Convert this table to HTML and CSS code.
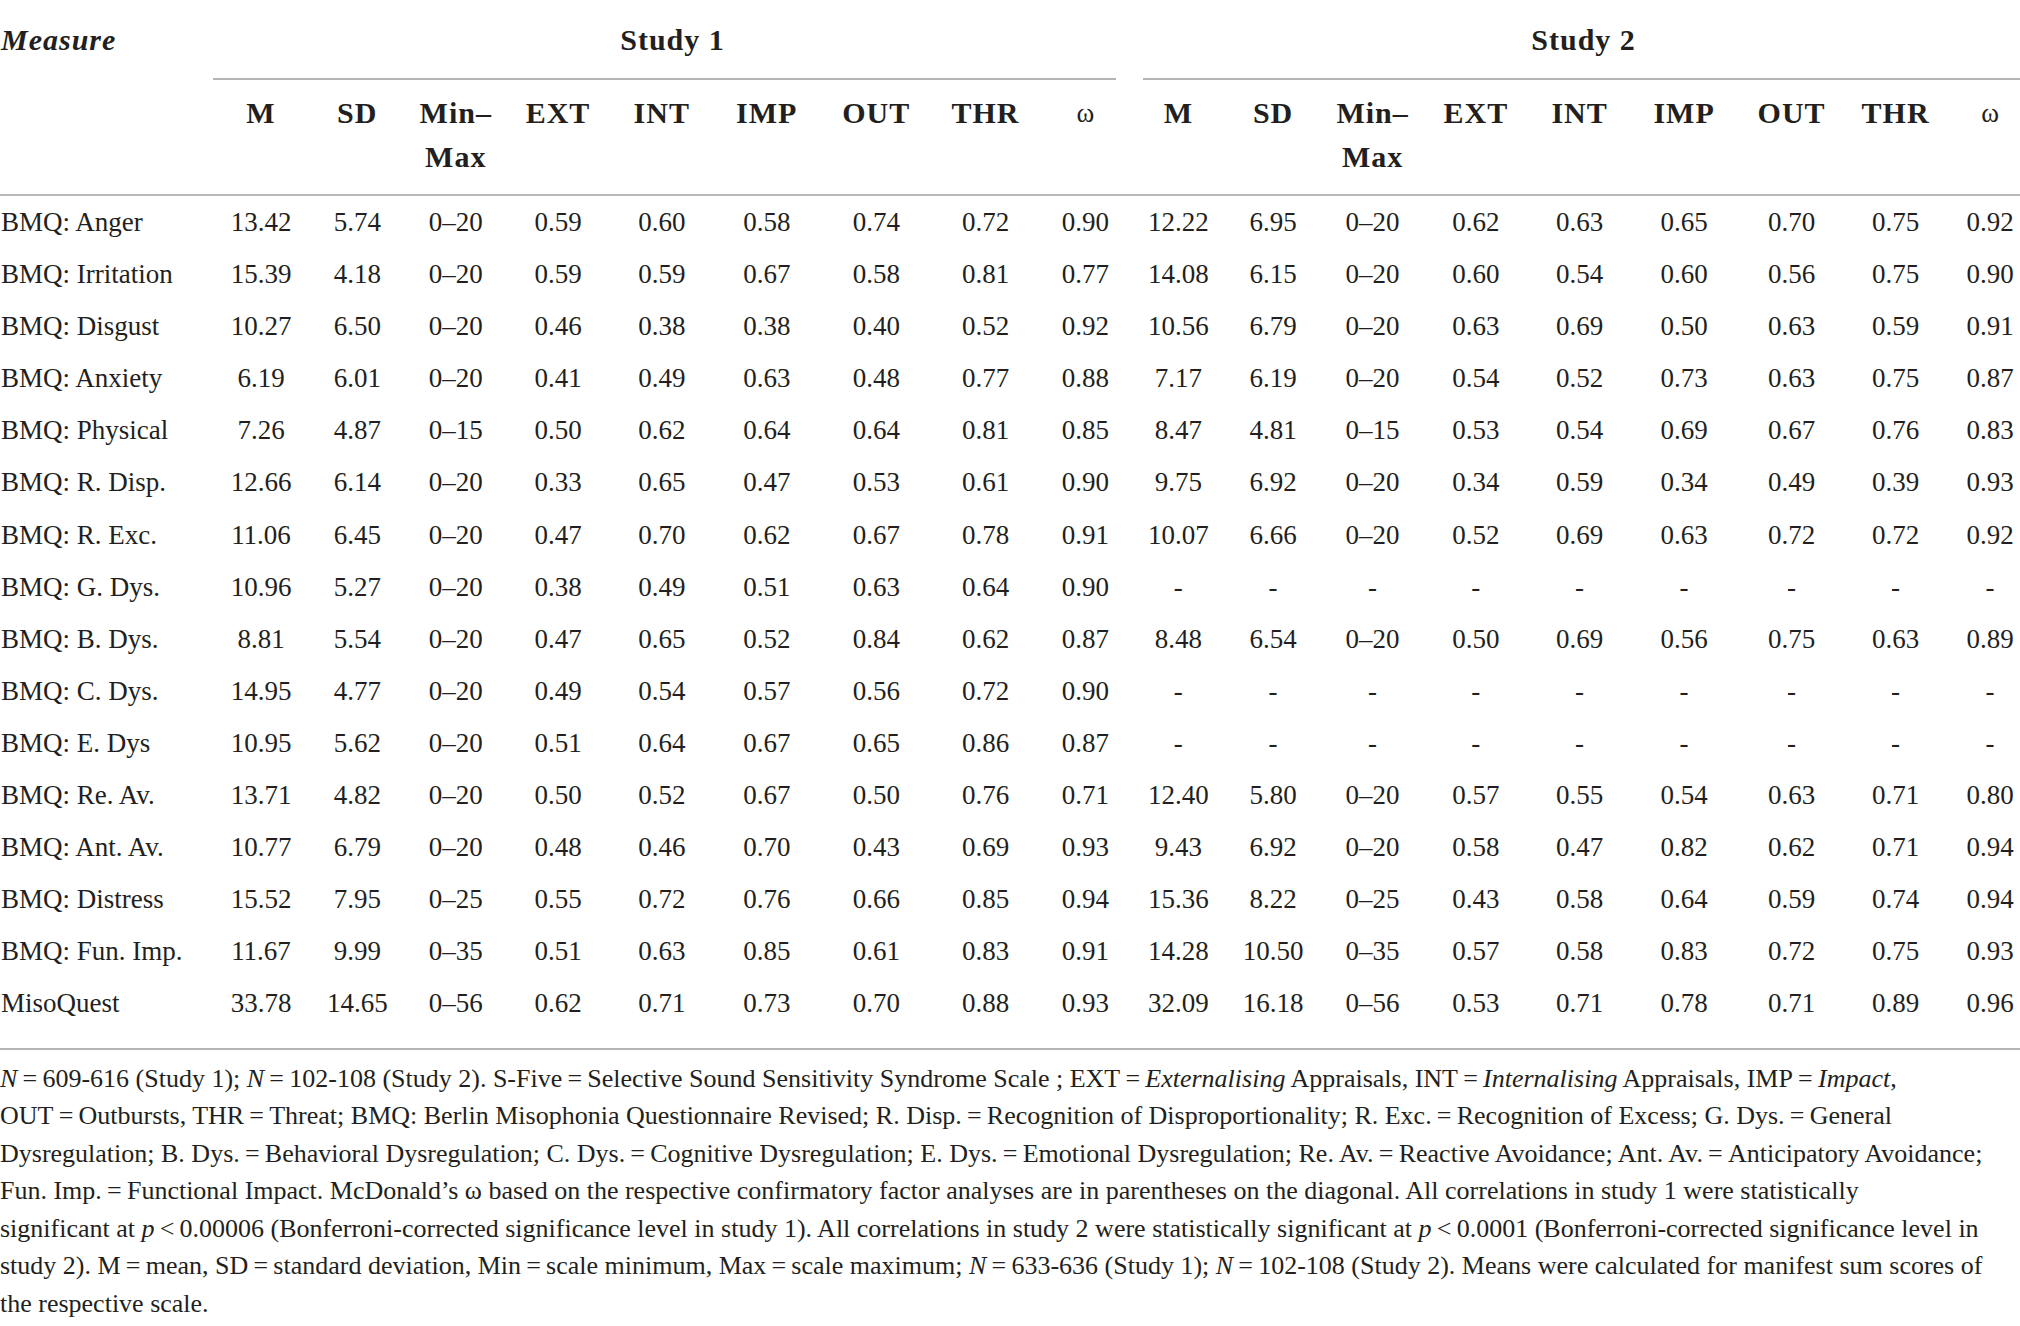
FILE: index.html
```html
<!DOCTYPE html>
<html lang="en">
<head>
<meta charset="utf-8">
<title>Table</title>
<link rel="stylesheet" href="styles.css">
</head>
<body>
<div class="page">
<table class="stats">
  <colgroup>
    <col class="c-label">
    <col class="c-a"><col class="c-b"><col class="c-c"><col class="c-d"><col class="c-e"><col class="c-f"><col class="c-g"><col class="c-h"><col class="c-i">
    <col class="c-j"><col class="c-k"><col class="c-l"><col class="c-m"><col class="c-n"><col class="c-o"><col class="c-p"><col class="c-q"><col class="c-r">
  </colgroup>
  <thead>
    <tr class="h1">
      <th class="measure">Measure</th>
      <th colspan="9" class="study"><span class="study-name">Study 1</span><div class="rule rule-s1"></div></th>
      <th colspan="9" class="study"><span class="study-name">Study 2</span><div class="rule rule-s2"></div></th>
    </tr>
    <tr class="h2">
      <th></th>
      <th>M</th><th>SD</th><th>Min–<br>Max</th><th>EXT</th><th>INT</th><th>IMP</th><th>OUT</th><th>THR</th><th class="omega">ω</th>
      <th>M</th><th>SD</th><th>Min–<br>Max</th><th>EXT</th><th>INT</th><th>IMP</th><th>OUT</th><th>THR</th><th class="omega">ω</th>
    </tr>
  </thead>
  <tbody>
    <tr><td>BMQ: Anger</td><td>13.42</td><td>5.74</td><td>0–20</td><td>0.59</td><td>0.60</td><td>0.58</td><td>0.74</td><td>0.72</td><td>0.90</td><td>12.22</td><td>6.95</td><td>0–20</td><td>0.62</td><td>0.63</td><td>0.65</td><td>0.70</td><td>0.75</td><td>0.92</td></tr>
    <tr><td>BMQ: Irritation</td><td>15.39</td><td>4.18</td><td>0–20</td><td>0.59</td><td>0.59</td><td>0.67</td><td>0.58</td><td>0.81</td><td>0.77</td><td>14.08</td><td>6.15</td><td>0–20</td><td>0.60</td><td>0.54</td><td>0.60</td><td>0.56</td><td>0.75</td><td>0.90</td></tr>
    <tr><td>BMQ: Disgust</td><td>10.27</td><td>6.50</td><td>0–20</td><td>0.46</td><td>0.38</td><td>0.38</td><td>0.40</td><td>0.52</td><td>0.92</td><td>10.56</td><td>6.79</td><td>0–20</td><td>0.63</td><td>0.69</td><td>0.50</td><td>0.63</td><td>0.59</td><td>0.91</td></tr>
    <tr><td>BMQ: Anxiety</td><td>6.19</td><td>6.01</td><td>0–20</td><td>0.41</td><td>0.49</td><td>0.63</td><td>0.48</td><td>0.77</td><td>0.88</td><td>7.17</td><td>6.19</td><td>0–20</td><td>0.54</td><td>0.52</td><td>0.73</td><td>0.63</td><td>0.75</td><td>0.87</td></tr>
    <tr><td>BMQ: Physical</td><td>7.26</td><td>4.87</td><td>0–15</td><td>0.50</td><td>0.62</td><td>0.64</td><td>0.64</td><td>0.81</td><td>0.85</td><td>8.47</td><td>4.81</td><td>0–15</td><td>0.53</td><td>0.54</td><td>0.69</td><td>0.67</td><td>0.76</td><td>0.83</td></tr>
    <tr><td>BMQ: R. Disp.</td><td>12.66</td><td>6.14</td><td>0–20</td><td>0.33</td><td>0.65</td><td>0.47</td><td>0.53</td><td>0.61</td><td>0.90</td><td>9.75</td><td>6.92</td><td>0–20</td><td>0.34</td><td>0.59</td><td>0.34</td><td>0.49</td><td>0.39</td><td>0.93</td></tr>
    <tr><td>BMQ: R. Exc.</td><td>11.06</td><td>6.45</td><td>0–20</td><td>0.47</td><td>0.70</td><td>0.62</td><td>0.67</td><td>0.78</td><td>0.91</td><td>10.07</td><td>6.66</td><td>0–20</td><td>0.52</td><td>0.69</td><td>0.63</td><td>0.72</td><td>0.72</td><td>0.92</td></tr>
    <tr><td>BMQ: G. Dys.</td><td>10.96</td><td>5.27</td><td>0–20</td><td>0.38</td><td>0.49</td><td>0.51</td><td>0.63</td><td>0.64</td><td>0.90</td><td>-</td><td>-</td><td>-</td><td>-</td><td>-</td><td>-</td><td>-</td><td>-</td><td>-</td></tr>
    <tr><td>BMQ: B. Dys.</td><td>8.81</td><td>5.54</td><td>0–20</td><td>0.47</td><td>0.65</td><td>0.52</td><td>0.84</td><td>0.62</td><td>0.87</td><td>8.48</td><td>6.54</td><td>0–20</td><td>0.50</td><td>0.69</td><td>0.56</td><td>0.75</td><td>0.63</td><td>0.89</td></tr>
    <tr><td>BMQ: C. Dys.</td><td>14.95</td><td>4.77</td><td>0–20</td><td>0.49</td><td>0.54</td><td>0.57</td><td>0.56</td><td>0.72</td><td>0.90</td><td>-</td><td>-</td><td>-</td><td>-</td><td>-</td><td>-</td><td>-</td><td>-</td><td>-</td></tr>
    <tr><td>BMQ: E. Dys</td><td>10.95</td><td>5.62</td><td>0–20</td><td>0.51</td><td>0.64</td><td>0.67</td><td>0.65</td><td>0.86</td><td>0.87</td><td>-</td><td>-</td><td>-</td><td>-</td><td>-</td><td>-</td><td>-</td><td>-</td><td>-</td></tr>
    <tr><td>BMQ: Re. Av.</td><td>13.71</td><td>4.82</td><td>0–20</td><td>0.50</td><td>0.52</td><td>0.67</td><td>0.50</td><td>0.76</td><td>0.71</td><td>12.40</td><td>5.80</td><td>0–20</td><td>0.57</td><td>0.55</td><td>0.54</td><td>0.63</td><td>0.71</td><td>0.80</td></tr>
    <tr><td>BMQ: Ant. Av.</td><td>10.77</td><td>6.79</td><td>0–20</td><td>0.48</td><td>0.46</td><td>0.70</td><td>0.43</td><td>0.69</td><td>0.93</td><td>9.43</td><td>6.92</td><td>0–20</td><td>0.58</td><td>0.47</td><td>0.82</td><td>0.62</td><td>0.71</td><td>0.94</td></tr>
    <tr><td>BMQ: Distress</td><td>15.52</td><td>7.95</td><td>0–25</td><td>0.55</td><td>0.72</td><td>0.76</td><td>0.66</td><td>0.85</td><td>0.94</td><td>15.36</td><td>8.22</td><td>0–25</td><td>0.43</td><td>0.58</td><td>0.64</td><td>0.59</td><td>0.74</td><td>0.94</td></tr>
    <tr><td>BMQ: Fun. Imp.</td><td>11.67</td><td>9.99</td><td>0–35</td><td>0.51</td><td>0.63</td><td>0.85</td><td>0.61</td><td>0.83</td><td>0.91</td><td>14.28</td><td>10.50</td><td>0–35</td><td>0.57</td><td>0.58</td><td>0.83</td><td>0.72</td><td>0.75</td><td>0.93</td></tr>
    <tr class="last"><td>MisoQuest</td><td>33.78</td><td>14.65</td><td>0–56</td><td>0.62</td><td>0.71</td><td>0.73</td><td>0.70</td><td>0.88</td><td>0.93</td><td>32.09</td><td>16.18</td><td>0–56</td><td>0.53</td><td>0.71</td><td>0.78</td><td>0.71</td><td>0.89</td><td>0.96</td></tr>
  </tbody>
</table>
<p class="note"><i>N</i>&thinsp;=&thinsp;609-616 (Study 1); <i>N</i>&thinsp;=&thinsp;102-108 (Study 2). S-Five&thinsp;=&thinsp;Selective Sound Sensitivity Syndrome Scale ; EXT&thinsp;=&thinsp;<i>Externalising</i> Appraisals, INT&thinsp;=&thinsp;<i>Internalising</i> Appraisals, IMP&thinsp;=&thinsp;<i>Impact</i>,<br>OUT&thinsp;=&thinsp;Outbursts, THR&thinsp;=&thinsp;Threat; BMQ: Berlin Misophonia Questionnaire Revised; R. Disp.&thinsp;=&thinsp;Recognition of Disproportionality; R. Exc.&thinsp;=&thinsp;Recognition of Excess; G. Dys.&thinsp;=&thinsp;General<br>Dysregulation; B. Dys.&thinsp;=&thinsp;Behavioral Dysregulation; C. Dys.&thinsp;=&thinsp;Cognitive Dysregulation; E. Dys.&thinsp;=&thinsp;Emotional Dysregulation; Re. Av.&thinsp;=&thinsp;Reactive Avoidance; Ant. Av.&thinsp;=&thinsp;Anticipatory Avoidance;<br>Fun. Imp.&thinsp;=&thinsp;Functional Impact. McDonald’s ω based on the respective confirmatory factor analyses are in parentheses on the diagonal. All correlations in study 1 were statistically<br>significant at <i>p</i>&thinsp;&lt;&thinsp;0.00006 (Bonferroni-corrected significance level in study 1). All correlations in study 2 were statistically significant at <i>p</i>&thinsp;&lt;&thinsp;0.0001 (Bonferroni-corrected significance level in<br>study 2). M&thinsp;=&thinsp;mean, SD&thinsp;=&thinsp;standard deviation, Min&thinsp;=&thinsp;scale minimum, Max&thinsp;=&thinsp;scale maximum; <i>N</i>&thinsp;=&thinsp;633-636 (Study 1); <i>N</i>&thinsp;=&thinsp;102-108 (Study 2). Means were calculated for manifest sum scores of<br>the respective scale.</p>
</div>
</body>
</html>
```
FILE: styles.css
```css
html, body {
  margin: 0;
  padding: 0;
  background: #ffffff;
}
.page {
  width: 2020px;
  overflow: hidden;
  color: #231f20;
  font-family: "Liberation Serif", "Times New Roman", serif;
}
.stats {
  table-layout: fixed;
  width: 2035px;
  border-collapse: separate;
  border-spacing: 0;
  font-size: 27px;
}
.c-label { width: 213px; }
.c-a { width: 96px; }
.c-b { width: 96.5px; }
.c-c { width: 100.5px; }
.c-d { width: 104px; }
.c-e { width: 103.5px; }
.c-f { width: 106.5px; }
.c-g { width: 112.5px; }
.c-h { width: 106px; }
.c-i { width: 93.5px; }
.c-j { width: 92.5px; }
.c-k { width: 97px; }
.c-l { width: 102px; }
.c-m { width: 104.5px; }
.c-n { width: 103px; }
.c-o { width: 106px; }
.c-p { width: 109px; }
.c-q { width: 99px; }
.c-r { width: 90px; }

.stats th {
  font-weight: bold;
  font-size: 30px;
  letter-spacing: 1px;
  line-height: 44px;
  text-align: center;
  vertical-align: top;
  padding: 0;
}
.h1 th {
  padding-top: 18px;
}
.h1 .measure {
  text-align: left;
  font-style: italic;
  padding-left: 1px;
}
.study-name {
  display: block;
}
.rule {
  margin-top: 16px;
  border-top: 2px solid #b4b4b4;
}
.rule-s1 { margin-right: 16px; }
.rule-s2 { margin-left: 11px; }

.h2 th {
  padding-top: 11px;
  padding-bottom: 15px;
  border-bottom: 2px solid #b8b8b8;
}
.h2 th.omega {
  font-weight: normal;
  font-size: 27px;
  letter-spacing: 0;
}

.stats td {
  padding: 0;
  line-height: 52.1px;
  text-align: center;
  white-space: nowrap;
}
.stats td:first-child {
  text-align: left;
  padding-left: 1px;
}
.stats tr.last td {
  padding-bottom: 18px;
  border-bottom: 2px solid #b4b4b4;
}

.note {
  margin: 10px 0 0 0;
  font-size: 26px;
  line-height: 37.5px;
  white-space: nowrap;
}
```
